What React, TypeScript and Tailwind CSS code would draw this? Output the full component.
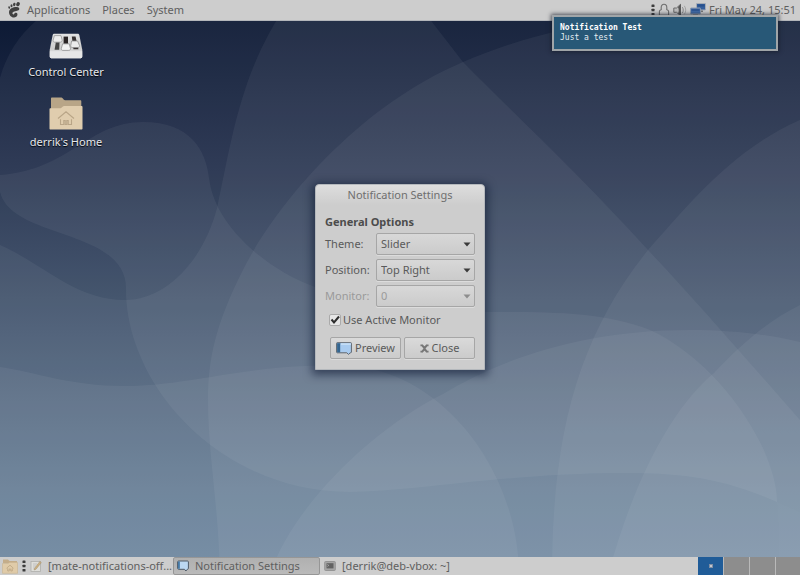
import React, { useState } from "react";

interface IconProps {
    className?: string,
}

interface SelectProps {
    Id: string,
    LabelName: string,
    Value: string,
    Options: string[],
    Disabled?: boolean,
    onChange: (e: React.ChangeEvent<HTMLSelectElement>) => void;
}

interface ButtonProps {
    Name: string,
    Icon: React.ReactNode,
    onClick?: () => void;
}

interface TaskProps {
    Name: string,
    Icon: React.ReactNode,
    Active?: boolean,
}

function Wallpaper() {
    return (
        <svg className="absolute inset-0 h-full w-full" viewBox="0 0 800 575" preserveAspectRatio="none" aria-hidden="true">
            <defs>
                <linearGradient id="sky" x1="0" y1="0" x2="0" y2="1">
                    <stop offset="0" stopColor="#0a1731" />
                    <stop offset="0.14" stopColor="#17233f" />
                    <stop offset="0.3" stopColor="#25324e" />
                    <stop offset="0.52" stopColor="#3b4d67" />
                    <stop offset="0.7" stopColor="#4d627c" />
                    <stop offset="0.85" stopColor="#5a738d" />
                    <stop offset="1" stopColor="#627e99" />
                </linearGradient>
            </defs>
            <rect width="800" height="575" fill="url(#sky)" />
            <g fill="#ffffff" fillOpacity="0.05">
                <path d="M37 20C18 36 6 56 0 78V575H800V0H55Z" />
                <path d="M0 175C70 170 88 122 143 122C190 122 206 150 209 178C215 228 270 270 310 285C370 310 430 312 495 312C550 312 605 312 650 330C720 362 777 450 777 502C720 477 680 473 620 473C500 474 410 492 350 492C220 492 126 385 126 290C128 228 12 240 0 192Z" />
                <path d="M290 0C240 70 232 140 217 208C203 262 165 300 125 300C75 300 45 265 0 245V575H800V420C760 375 700 305 648 250C580 175 510 110 463 62L415 0Z" />
                <path d="M0 367C35 372 70 386 125 386C190 386 240 365 340 365C440 366 519 470 519 575H0Z" />
                <path d="M620 20C560 28 515 40 463 62C350 110 270 215 243 270C215 325 208 360 208 400C208 455 218 500 220 575H800V20Z" />
                <path d="M800 120C730 150 680 215 648 250C580 335 552 430 552 575H800Z" />
                <path d="M270 575C290 510 370 430 443 394C500 360 580 330 690 330C735 330 770 335 800 342V575Z" />
                <path d="M608 575C635 475 675 405 714 373C745 340 770 320 800 305V575Z" />
            </g>
            <path d="M777 502L800 512V575H778C779 545 779 525 777 502Z" fill="#ffffff" fillOpacity="0.015" />
        </svg>
    );
}

function FootIcon({ className }: IconProps) {
    return (
        <svg className={className} viewBox="0 0 14 16" fill="#424242" aria-hidden="true">
            <ellipse cx="11" cy="2.2" rx="1.7" ry="2.1" transform="rotate(28 11 2.2)" />
            <ellipse cx="7.3" cy="2.5" rx="1.2" ry="1.7" transform="rotate(12 7.3 2.5)" />
            <ellipse cx="4.5" cy="3.8" rx="1" ry="1.5" />
            <ellipse cx="2.2" cy="5.5" rx="0.9" ry="1.3" transform="rotate(-15 2.2 5.5)" />
            <path d="M10.8 5.2C7 4.7 2 6.5 2 10.2C2 13 4.3 15.7 7.2 15.5C9.7 15.3 10.8 13.4 10.4 11.8C10.1 10.7 8.8 10.6 7.9 11.1C7 11.6 7.5 12.5 6.5 12.4C5.2 12.2 4.8 10.4 6.6 9.7C8.6 9 12 9.2 12.3 7.1C12.4 6 11.8 5.3 10.8 5.2Z" />
        </svg>
    );
}

function DotsIcon({ className }: IconProps) {
    return (
        <svg className={className} viewBox="0 0 4 12" fill="#3c3c3c" aria-hidden="true">
            <rect x="0.5" y="0.5" width="3" height="2.6" rx="0.6" />
            <rect x="0.5" y="4.7" width="3" height="2.6" rx="0.6" />
            <rect x="0.5" y="8.9" width="3" height="2.6" rx="0.6" />
        </svg>
    );
}

function LockIcon({ className }: IconProps) {
    return (
        <svg className={className} viewBox="0 0 12 14" fill="none" stroke="#6e6e6e" strokeWidth="1.1" aria-hidden="true">
            <path d="M3.2 7V4.4C3.2 2.3 4.3 1.2 6 1.2S8.8 2.3 8.8 4.4V7" />
            <path d="M1.4 12.3V8.4C1.4 7.5 2 7 2.8 7H3.2M8.8 7H9.2C10 7 10.6 7.5 10.6 8.4V12.3H1.4" />
        </svg>
    );
}

function SpeakerIcon({ className }: IconProps) {
    return (
        <svg className={className} viewBox="0 0 14 14" fill="none" aria-hidden="true">
            <path d="M0.8 5H3.5L7.5 1.3V12.7L3.5 9.3H0.8Z" fill="#bdbdbd" stroke="#6a6a6a" />
            <path d="M5 4.2L7.8 1V13L5 10.4C6 8.5 6 6 5 4.2Z" fill="#565656" />
            <path d="M9.4 4.2C10.5 6 10.5 8.2 9.4 10" stroke="#858585" />
            <path d="M11.3 2.8C13.2 5.2 13.2 9 11.3 11.4" stroke="#a3a3a3" />
        </svg>
    );
}

function NetworkIcon({ className }: IconProps) {
    return (
        <svg className={className} viewBox="0 0 16 14" aria-hidden="true">
            <rect x="6.5" y="0.5" width="9" height="6.5" rx="0.5" fill="#355f9c" stroke="#a4abb5" />
            <rect x="7.5" y="1.5" width="7" height="2" fill="#27508c" />
            <rect x="10" y="7.5" width="3" height="1.5" fill="#777" />
            <rect x="0.5" y="5" width="10" height="6" rx="0.5" fill="#426ba8" stroke="#8f9caf" />
            <rect x="1.5" y="6" width="8" height="2" fill="#2f5793" />
            <rect x="3" y="11.5" width="5" height="1.5" fill="#777" />
        </svg>
    );
}

function ControlCenterIcon({ className }: IconProps) {
    return (
        <svg className={className} viewBox="0 0 34 26" aria-hidden="true">
            <defs>
                <linearGradient id="deck" x1="0" y1="0" x2="0" y2="1">
                    <stop offset="0" stopColor="#e2e2e2" />
                    <stop offset="0.6" stopColor="#cfcfcf" />
                    <stop offset="1" stopColor="#f0f0f0" />
                </linearGradient>
            </defs>
            <path d="M5.5 0.8H28.5C29.5 0.8 30 1.2 30.3 2.1L33.3 17V23.5C33.3 24.7 32.3 25.3 31 25.3H3C1.7 25.3 0.7 24.7 0.7 23.5V17L3.7 2.1C4 1.2 4.5 0.8 5.5 0.8Z" fill="url(#deck)" />
            <path d="M0.8 18.2H33.2V23.5C33.2 24.7 32.3 25.3 31 25.3H3C1.7 25.3 0.8 24.7 0.8 23.5Z" fill="#e6e6e6" />
            <path d="M7 8H10.6L10.2 16.8H5.6Z" fill="#454545" />
            <rect x="14.6" y="3.6" width="4.4" height="9" fill="#2a2424" />
            <path d="M22.8 3.6H26.5L29.5 16.2H24.5Z" fill="#383232" />
            <path d="M5.4 2.6H12L13.2 7.2C13.2 8.5 12.4 9.2 11.3 9.2H5.7C4.6 9.2 4 8.5 4.1 7.3Z" fill="#ececec" stroke="#979797" strokeWidth="0.8" />
            <path d="M13.6 10.8H20.2L21.5 15.5C21.5 16.8 20.8 17.4 19.8 17.4H14C12.8 17.4 12.2 16.8 12.3 15.6Z" fill="#f2f2f2" stroke="#8e8e8e" strokeWidth="0.8" />
            <path d="M22.6 8H28.6L30.5 12.5C30.7 13.8 29.9 14.5 28.8 14.5H23.3C22.2 14.5 21.6 13.8 21.7 12.7Z" fill="#ebebeb" stroke="#8e8e8e" strokeWidth="0.8" />
        </svg>
    );
}

function HomeFolderIcon({ className }: IconProps) {
    return (
        <svg className={className} viewBox="0 0 34 33" aria-hidden="true">
            <path d="M2 13V1.5C2 0.8 2.4 0.5 3 0.5H12.5C13.8 0.5 14.3 3.2 16 3.2H31.3C32 3.2 32.3 3.6 32.3 4.2V13Z" fill="#b8a587" />
            <path d="M0.5 12.2C0.5 11.6 0.9 11.2 1.5 11.2H11.5C13 11.2 13.5 9 15.5 9H32.5C33.1 9 33.5 9.4 33.5 10V31.5C33.5 32.1 33.1 32.5 32.5 32.5H1.5C0.9 32.5 0.5 32.1 0.5 31.5Z" fill="#e0cdae" />
            <path d="M9 21.5L17 14.8L25 21.5M11.5 22.3V27.5H14.8V23.5H16.2V27.5H17.8V23.5H19.2V27.5H22.5V22.3" fill="none" stroke="#b9a587" strokeWidth="1.1" />
        </svg>
    );
}

function BubbleIcon({ className }: IconProps) {
    return (
        <svg className={className} viewBox="0 0 16 13" aria-hidden="true">
            <path d="M1.2 0.7H14.8C15.2 0.7 15.4 0.9 15.4 1.3V10C15.4 10.5 15.1 10.8 14.6 10.8H14.2L12.5 12.4L10.8 10.8H1.2C0.8 10.8 0.6 10.5 0.6 10V1.3C0.6 0.9 0.8 0.7 1.2 0.7Z" fill="#a9cbef" stroke="#5f666e" />
            <path d="M1.1 1.2H4.2V10.3H1.1Z" fill="#34658f" />
            <path d="M5 1.2H14.9V3H5Z" fill="#c4ddf5" />
        </svg>
    );
}

function SmallBubbleIcon({ className }: IconProps) {
    return (
        <svg className={className} viewBox="0 0 12 12" aria-hidden="true">
            <path d="M1.5 1H10.5C11 1 11.4 1.4 11.4 1.9V8.4C11.4 8.9 11 9.3 10.5 9.3H10.3L8.9 11L7.5 9.3H1.5C1 9.3 0.6 8.9 0.6 8.4V1.9C0.6 1.4 1 1 1.5 1Z" fill="#bcd8f2" stroke="#4f5a66" />
            <path d="M1.1 1.5H2.8V8.8H1.1Z" fill="#3b719f" />
        </svg>
    );
}

function CloseIcon({ className }: IconProps) {
    return (
        <svg className={className} viewBox="0 0 10 10" fill="none" stroke="#777" strokeWidth="2" aria-hidden="true">
            <path d="M0.5 1.6H2.6L5 4L7.4 1.6H9.5M0.5 8.4H2.6L5 6L7.4 8.4H9.5M1.8 0.8L8.2 9.2M8.2 0.8L1.8 9.2" />
        </svg>
    );
}

function NoteIcon({ className }: IconProps) {
    return (
        <svg className={className} viewBox="0 0 12 12" aria-hidden="true">
            <rect x="1" y="1.5" width="9.5" height="10" fill="#dededa" stroke="#aeaeab" strokeWidth="0.8" />
            <path d="M3 4H7M3 6H6M3 8H5" stroke="#b4b4b4" strokeWidth="0.7" />
            <path d="M4.5 8.5L9.8 1.5L11.3 2.6L6 9.2L4 10Z" fill="#cdb080" stroke="#a08e6e" strokeWidth="0.5" />
        </svg>
    );
}

function TerminalIcon({ className }: IconProps) {
    return (
        <svg className={className} viewBox="0 0 12 12" aria-hidden="true">
            <rect x="0.7" y="1.5" width="10.6" height="9" rx="0.8" fill="#a5a5a5" stroke="#959595" />
            <rect x="2.5" y="3.2" width="7" height="5.2" fill="#636363" />
            <path d="M3.4 4.4L4.8 5.4L3.4 6.4" stroke="#bbb" strokeWidth="0.7" fill="none" />
        </svg>
    );
}

function PanelFolderIcon({ className }: IconProps) {
    return (
        <svg className={className} viewBox="0 0 16 16" aria-hidden="true">
            <path d="M1 5V1.5H6L7.5 3H15V6Z" fill="#c4ad8a" />
            <path d="M0.5 5.5H6L7.5 4.5H15.5V15.3H0.5Z" fill="#e0cba8" stroke="#cbb590" strokeWidth="0.6" />
            <path d="M4.5 10.3L8 7.2L11.5 10.3M5.7 10.2V13H7.2V11H8.8V13H10.3V10.2" fill="none" stroke="#bda683" strokeWidth="0.8" />
        </svg>
    );
}

function Select(props: SelectProps) {
    const { Id, LabelName, Value, Options, Disabled, onChange } = props;
    return (
        <div className={Disabled ? "flex items-center text-[#9a9a9a]" : "flex items-center text-[#5a5a5a]"}>
            <label htmlFor={Id} className="w-[51px] shrink-0">{LabelName}</label>
            <div className="relative flex-1">
                <select id={Id} value={Value} disabled={Disabled} onChange={onChange} className="block h-[22px] w-full appearance-none rounded-[2px] border border-[#a6a6a6] bg-linear-to-b from-[#d8d8d8] to-[#cbcbcb] pl-1 pr-4 shadow-[0_1px_0_#dcdcdc] disabled:opacity-100">
                    {Options.map((o) => <option key={o}>{o}</option>)}
                </select>
                <svg className="pointer-events-none absolute right-1 top-[9px] h-[5px] w-2" viewBox="0 0 8 5" fill={Disabled ? "#8d8d8d" : "#3a3a3a"} aria-hidden="true">
                    <path d="M0.5 0.5H7.5L4 4.5Z" />
                </svg>
            </div>
        </div>
    );
}

function Button(props: ButtonProps) {
    const { Name, Icon, onClick } = props;
    return (
        <button className="flex h-[22px] flex-1 items-center justify-center gap-[3px] whitespace-nowrap rounded-[2px] border border-[#a6a6a6] bg-linear-to-b from-[#dadada] to-[#cbcbcb] text-[#5a5a5a] shadow-[0_1px_0_#dcdcdc]" onClick={() => onClick && onClick()}>
            {Icon}
            {Name}
        </button>
    );
}

function SettingsDialog({ onClose }: { onClose: () => void }) {
    const [theme, setTheme] = useState("Slider");
    const [position, setPosition] = useState("Top Right");
    const [monitor, setMonitor] = useState("0");
    const [active, setActive] = useState(true);

    return (
        <section aria-labelledby="dialog-title" className="absolute left-1/2 top-[163px] w-[170px] -translate-x-1/2 rounded-t-[4px] border border-[#b4b8bc] bg-[#cdcdcd] shadow-[0_2px_9px_3px_rgba(10,20,45,0.55)]">
            <h1 id="dialog-title" className="rounded-t-[4px] bg-linear-to-b from-[#dddddd] to-[#cdcdcd] py-1 text-center leading-3 text-[#6f6f6f]">Notification Settings</h1>
            <div className="flex flex-col px-[9px] pb-[10px] pt-2">
                <h2 className="font-bold leading-[18px] text-[#4c4c4c]">General Options</h2>
                <div className="mt-[2px] flex flex-col gap-1">
                    <Select Id="theme" LabelName="Theme:" Value={theme} Options={["Slider", "Coco", "Nodoka", "Standard"]} onChange={(e) => setTheme(e.target.value)} />
                    <Select Id="position" LabelName="Position:" Value={position} Options={["Top Left", "Top Right", "Bottom Left", "Bottom Right"]} onChange={(e) => setPosition(e.target.value)} />
                    <Select Id="monitor" LabelName="Monitor:" Value={monitor} Options={["0"]} Disabled={active} onChange={(e) => setMonitor(e.target.value)} />
                </div>
                <div className="mt-1 flex items-center gap-[2px] pl-1 leading-[18px] text-[#5a5a5a]">
                    <span className="relative block h-3 w-3">
                        <input id="active-monitor" type="checkbox" checked={active} onChange={(e) => setActive(e.target.checked)} className="block h-3 w-3 appearance-none rounded-[2px] border border-[#aaaaaa] bg-[#e6e6e6]" />
                        {active && (
                            <svg className="pointer-events-none absolute inset-0 h-3 w-3" viewBox="0 0 12 12" fill="none" stroke="#2d2d2d" strokeWidth="2" aria-hidden="true">
                                <path d="M2.5 5.5L5 8.5L10 2.5" />
                            </svg>
                        )}
                    </span>
                    <label htmlFor="active-monitor" className="whitespace-nowrap">Use Active Monitor</label>
                </div>
                <div className="mt-2 flex gap-[3px] pl-[5px]">
                    <Button Name="Preview" Icon={<BubbleIcon className="h-[13px] w-4 shrink-0" />} />
                    <Button Name="Close" Icon={<CloseIcon className="h-[9px] w-[9px] shrink-0" />} onClick={onClose} />
                </div>
            </div>
        </section>
    );
}

function Task(props: TaskProps) {
    const { Name, Icon, Active } = props;
    return (
        <button className={Active ? "flex h-full w-[147px] items-center gap-[6px] rounded-[2px] border border-[#969696] bg-linear-to-b from-[#b0b0b0] to-[#bababa] px-[3px]" : "flex h-full w-[147px] items-center gap-[6px] pl-1"}>
            {Icon}
            <span className="whitespace-nowrap">{Name}</span>
        </button>
    );
}

export default function App() {
    const [open, setOpen] = useState(true);

    return (
        <div className="relative flex min-h-screen flex-col overflow-hidden font-['Noto_Sans',sans-serif] text-[11px]">
            <Wallpaper />

            <header className="relative flex h-[21px] items-center justify-between border-b border-[#b3b6ba] bg-[#cdcdcd] pl-[7px] pr-1 text-[#5f5f5f]">
                <nav className="flex items-center gap-3">
                    <button className="flex items-center gap-[6px]">
                        <FootIcon className="h-4 w-[14px]" />
                        Applications
                    </button>
                    <button>Places</button>
                    <button>System</button>
                </nav>
                <div className="flex items-center gap-[3px]">
                    <DotsIcon className="h-3 w-1" />
                    <LockIcon className="h-[14px] w-3" />
                    <SpeakerIcon className="h-[14px] w-[14px]" />
                    <NetworkIcon className="h-[14px] w-4" />
                    <time dateTime="05-24T15:51">Fri May 24, 15:51</time>
                </div>
            </header>

            <main className="relative flex-1">
                <div className="flex w-[132px] flex-col items-center gap-4 pt-3 text-[#e6e8ec]">
                    <button className="flex flex-col items-center gap-[5px] [text-shadow:0_1px_1px_#000]">
                        <ControlCenterIcon className="h-[26px] w-[34px]" />
                        Control Center
                    </button>
                    <button className="flex flex-col items-center gap-1 [text-shadow:0_1px_1px_#000]">
                        <HomeFolderIcon className="h-[33px] w-[34px]" />
                        derrik's Home
                    </button>
                </div>
                {open && <SettingsDialog onClose={() => setOpen(false)} />}
            </main>

            <footer className="relative flex h-[18px] items-center justify-between bg-[#cdcdcd] text-[#5f5f5f]">
                <div className="flex h-full items-center">
                    <button aria-label="Home folder" className="mr-1 pl-[2px]">
                        <PanelFolderIcon className="h-4 w-4" />
                    </button>
                    <DotsIcon className="h-3 w-1" />
                    <Task Name="[mate-notifications-off..." Icon={<NoteIcon className="h-3 w-3 shrink-0" />} />
                    <Task Name="Notification Settings" Icon={<SmallBubbleIcon className="h-3 w-3 shrink-0" />} Active />
                    <Task Name="[derrik@deb-vbox: ~]" Icon={<TerminalIcon className="h-3 w-3 shrink-0" />} />
                </div>
                <div className="flex h-full gap-px bg-[#b9b9b9]">
                    <button aria-label="Workspace 1" className="flex w-[25px] items-center justify-center bg-[#205c98]">
                        <span className="h-1 w-1 border border-[#7f8ea3] bg-[#c3c8d0]" />
                    </button>
                    <button aria-label="Workspace 2" className="w-[25px] bg-[#8d8d8d]" />
                    <button aria-label="Workspace 3" className="w-[25px] bg-[#8d8d8d]" />
                    <button aria-label="Workspace 4" className="w-6 bg-[#8d8d8d]" />
                </div>
            </footer>

            <aside className="absolute right-[22px] top-[15px] h-9 w-[226px] border-2 border-[#a0a5a8] bg-[#285877] px-[6px] py-[6px] font-['DejaVu_Sans_Mono',monospace] text-[8px] leading-[10px] text-[#e6edf2] shadow-[0_0_4px_1px_rgba(20,25,40,0.7)]">
                <p className="font-bold text-white">Notification Test</p>
                <p>Just a test</p>
            </aside>
        </div>
    );
}
